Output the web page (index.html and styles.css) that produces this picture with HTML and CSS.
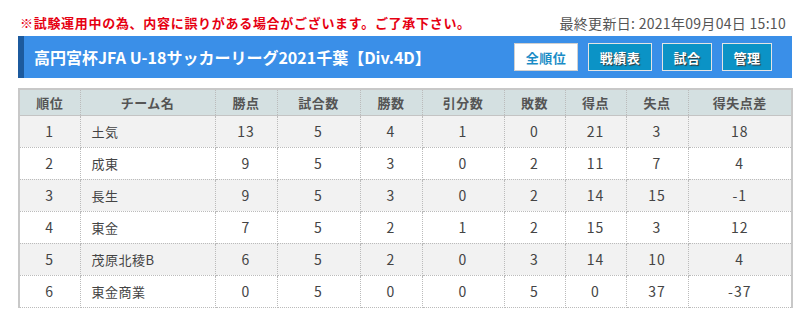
FILE: index.html
```html
<!DOCTYPE html>
<html lang="ja">
<head>
<meta charset="utf-8">
<link rel="stylesheet" href="styles.css">
</head>
<body>
<div class="page">
  <div class="topline">
    <span class="notice">※試験運用中の為、内容に誤りがある場合がございます。ご了承下さい。</span>
    <span class="updated">最終更新日: 2021年09月04日 15:10</span>
  </div>
  <div class="bar">
    <h1 class="title">高円宮杯JFA U-18サッカーリーグ2021千葉【Div.4D】</h1>
    <div class="btns">
      <a class="btn btn-active w64">全順位</a>
      <a class="btn w64">戦績表</a>
      <a class="btn w50">試合</a>
      <a class="btn w50">管理</a>
    </div>
  </div>
  <table class="rank">
    <colgroup>
      <col class="c1"><col class="c2"><col class="c3"><col class="c4"><col class="c5">
      <col class="c6"><col class="c7"><col class="c8"><col class="c9"><col class="c10">
    </colgroup>
    <thead>
      <tr><th>順位</th><th>チーム名</th><th>勝点</th><th>試合数</th><th>勝数</th><th>引分数</th><th>敗数</th><th>得点</th><th>失点</th><th>得失点差</th></tr>
    </thead>
    <tbody>
      <tr><td>1</td><td class="team">土気</td><td>13</td><td>5</td><td>4</td><td>1</td><td>0</td><td>21</td><td>3</td><td>18</td></tr>
      <tr><td>2</td><td class="team">成東</td><td>9</td><td>5</td><td>3</td><td>0</td><td>2</td><td>11</td><td>7</td><td>4</td></tr>
      <tr><td>3</td><td class="team">長生</td><td>9</td><td>5</td><td>3</td><td>0</td><td>2</td><td>14</td><td>15</td><td>-1</td></tr>
      <tr><td>4</td><td class="team">東金</td><td>7</td><td>5</td><td>2</td><td>1</td><td>2</td><td>15</td><td>3</td><td>12</td></tr>
      <tr><td>5</td><td class="team">茂原北稜B</td><td>6</td><td>5</td><td>2</td><td>0</td><td>3</td><td>14</td><td>10</td><td>4</td></tr>
      <tr><td>6</td><td class="team">東金商業</td><td>0</td><td>5</td><td>0</td><td>0</td><td>5</td><td>0</td><td>37</td><td>-37</td></tr>
    </tbody>
  </table>
</div>
</body>
</html>
```

FILE: styles.css
```css
* { box-sizing: border-box; }
body {
  margin: 0;
  background: #fff;
  font-family: "Noto Sans CJK JP", "Noto Sans", sans-serif;
  color: #444;
}
.page {
  width: 774px;
  margin-left: 18px;
  padding-top: 14px;
}
.topline {
  display: flex;
  justify-content: space-between;
  align-items: center;
  height: 18px;
  padding-left: 2px;
  padding-right: 6px;
}
.notice {
  color: #e60012;
  font-weight: bold;
  font-size: 13px;
  letter-spacing: 0.7px;
  line-height: 18px;
}
.updated {
  color: #555;
  font-size: 14px;
  letter-spacing: 0.3px;
  line-height: 18px;
}
.bar {
  margin-top: 4px;
  height: 42px;
  background: #3a8fe8;
  border-left: 6px solid #1c5a9e;
  display: flex;
  align-items: center;
  justify-content: space-between;
  padding-left: 10px;
  padding-right: 20px;
}
.title {
  margin: 0;
  color: #fff;
  font-size: 16px;
  font-weight: bold;
  line-height: 20px;
}
.btns {
  display: flex;
  gap: 10px;
}
.btn {
  display: flex;
  align-items: center;
  justify-content: center;
  height: 28px;
  background: #0b93c6;
  border: 1px solid #e4e4e4;
  color: #fff;
  font-size: 13px;
  font-weight: bold;
  text-shadow: 1px 1px 1px #333;
  letter-spacing: 0.5px;
}
.btn-active {
  background: #fff;
  color: #1a8cc6;
  text-shadow: none;
  border-color: #d0d0d0;
}
.w64 { width: 64px; }
.w50 { width: 50px; }

.rank {
  margin-top: 10px;
  width: 773px;
  border-collapse: collapse;
  table-layout: fixed;
  font-size: 14px;
  border-left: 2px solid #c8c8c8;
  border-right: 2px solid #c8c8c8;
}
.c1 { width: 61px; }
.c2 { width: 135px; }
.c3 { width: 62px; }
.c4 { width: 83px; }
.c5 { width: 62px; }
.c6 { width: 82px; }
.c7 { width: 61px; }
.c8 { width: 61px; }
.c9 { width: 62px; }
.c10 { width: 104px; }
.rank th {
  background: #d4e0e1;
  color: #555;
  font-size: 13px;
  font-weight: bold;
  height: 26px;
  padding: 0;
  border-top: 2px solid #c8c8c8;
  border-bottom: 1px solid #c4c4c4;
  border-left: 1px dotted #bbb;
  border-right: 1px dotted #bbb;
  text-align: center;
  letter-spacing: 0.5px;
}
.rank td {
  height: 32px;
  padding: 0;
  text-align: center;
  color: #444;
  letter-spacing: 1px;
  border: 1px dotted #bbb;
}
.rank td.team {
  text-align: left;
  padding-left: 11px;
  font-size: 13px;
  letter-spacing: 0.5px;
}
.rank tbody tr:nth-child(odd) td { background: #f2f2f2; }
.rank tbody tr:nth-child(even) td { background: #fff; }
```
